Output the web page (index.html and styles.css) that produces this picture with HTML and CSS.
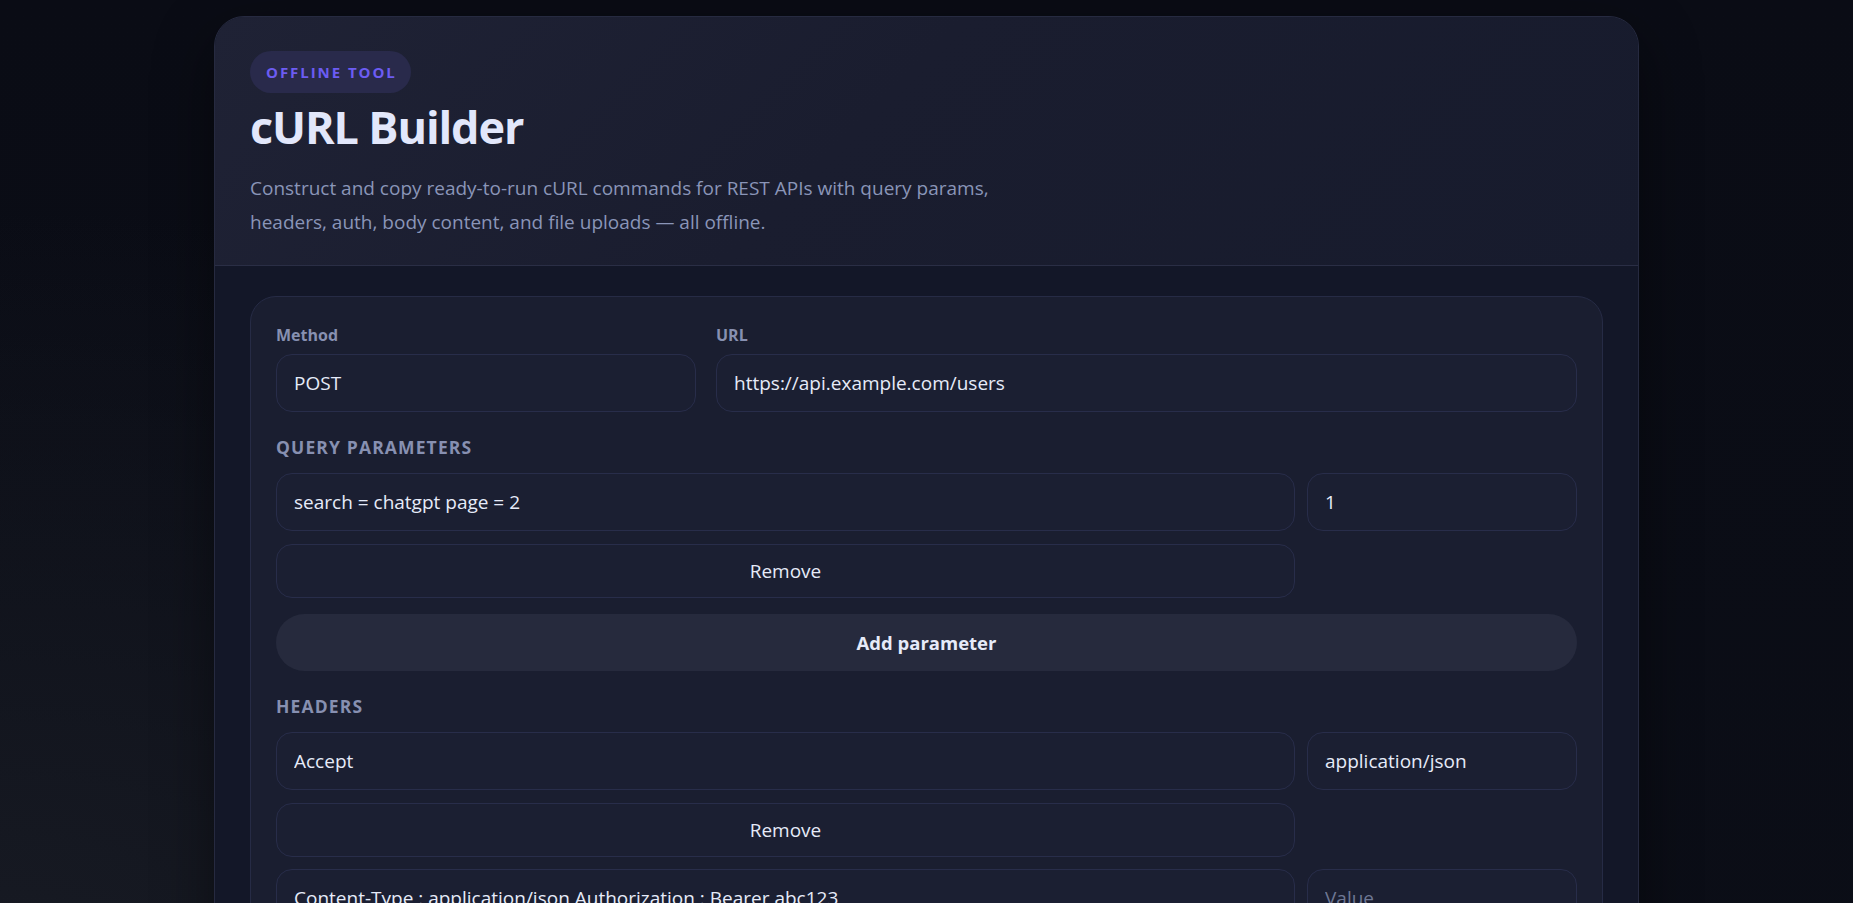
FILE: index.html
```html
<!DOCTYPE html>
<html lang="en">
<head>
<meta charset="utf-8">
<title>cURL Builder</title>
<link rel="stylesheet" href="styles.css">
</head>
<body>
<main class="page">
  <section class="card">
    <header class="hero">
      <span class="badge">Offline tool</span>
      <h1 class="title">cURL Builder</h1>
      <p class="lead">Construct and copy ready-to-run cURL commands for REST APIs with query params, headers, auth, body content, and file uploads — all offline.</p>
    </header>
    <div class="card-body">
      <div class="panel">
        <div class="request-row">
          <div class="field">
            <span class="field-label">Method</span>
            <input class="input" type="text" value="POST">
          </div>
          <div class="field">
            <span class="field-label">URL</span>
            <input class="input" type="text" value="https://api.example.com/users">
          </div>
        </div>

        <h2 class="section-title">Query parameters</h2>
        <div class="kv-list">
          <div class="kv-row">
            <input class="input" type="text" value="search = chatgpt page = 2">
            <input class="input" type="text" value="1">
            <button class="btn-remove" type="button">Remove</button>
          </div>
        </div>
        <button class="btn-add" type="button">Add parameter</button>

        <h2 class="section-title">Headers</h2>
        <div class="kv-list">
          <div class="kv-row">
            <input class="input" type="text" value="Accept">
            <input class="input" type="text" value="application/json">
            <button class="btn-remove" type="button">Remove</button>
          </div>
          <div class="kv-row">
            <input class="input" type="text" value="Content-Type : application/json Authorization : Bearer abc123">
            <input class="input" type="text" placeholder="Value">
            <button class="btn-remove" type="button">Remove</button>
          </div>
        </div>
        <button class="btn-add" type="button">Add header</button>

        <h2 class="section-title">Authentication</h2>
        <div class="request-row">
          <div class="field">
            <span class="field-label">Type</span>
            <input class="input" type="text" value="None">
          </div>
          <div class="field">
            <span class="field-label">Token</span>
            <input class="input" type="text" placeholder="Token">
          </div>
        </div>

        <h2 class="section-title">Body</h2>
        <textarea class="textarea">{ "name": "Ada", "role": "admin" }</textarea>

        <h2 class="section-title">File upload</h2>
        <div class="dropzone">Choose a file to attach with -F (optional)</div>

        <h2 class="section-title">Generated command</h2>
        <pre class="output">curl -X POST "https://api.example.com/users?search+%3D+chatgpt+page+%3D+2=1" \
  -H "Accept: application/json" \
  -d '{ "name": "Ada", "role": "admin" }'</pre>
        <button class="btn-add" type="button">Copy command</button>
      </div>
    </div>
  </section>
</main>
</body>
</html>
```

FILE: styles.css
```css
* { box-sizing: border-box; }

html { background: #0b0e17; }

body {
  margin: 0;
  font-family: "Open Sans", "Noto Sans", sans-serif;
  color: #e4e9f8;
  background:
    radial-gradient(ellipse at 0% 50%, #171a23 0%, rgba(23,26,35,0) 55%),
    linear-gradient(180deg, #0a0c15 0%, #0c0f18 100%);
  min-height: 100vh;
}

.page {
  padding: 16px 0 32px;
}

.card {
  width: 1425px;
  margin: 0 auto;
  border: 1px solid #262a40;
  border-radius: 30px;
  overflow: hidden;
  background: #131728;
  box-shadow: 0 20px 60px rgba(0,0,0,0.45);
}

.hero {
  padding: 34px 35px 26px;
  background: linear-gradient(135deg, #1f2235 0%, #1a1d2f 45%, #171b2d 100%);
  border-bottom: 1px solid #2a2e45;
}

.badge {
  display: inline-flex;
  align-items: center;
  height: 42px;
  padding: 0 14px 0 16px;
  border-radius: 21px;
  background: #292a4b;
  color: #6c5cf2;
  font-size: 15px;
  font-weight: 700;
  letter-spacing: 0.13em;
  text-transform: uppercase;
}

.title {
  margin: 9px 0 0;
  font-size: 45px;
  line-height: 50px;
  font-weight: 700;
  letter-spacing: -0.025em;
  color: #e2e7fb;
}

.lead {
  margin: 19px 0 0;
  max-width: 760px;
  font-size: 19px;
  line-height: 34px;
  color: #8a95b8;
}

.card-body {
  padding: 30px 35px 35px;
}

.panel {
  border: 1px solid #262b45;
  border-radius: 26px;
  background: #1a1e30;
  padding: 28px 25px 28px;
}

.request-row {
  display: grid;
  grid-template-columns: 420px 1fr;
  gap: 20px;
}

.field {
  display: flex;
  flex-direction: column;
  gap: 9px;
}

.field-label {
  font-size: 16px;
  line-height: 20px;
  font-weight: 700;
  color: #8790b1;
}

.input {
  display: block;
  width: 100%;
  height: 58px;
  padding: 0 17px;
  border: 1px solid #282d4a;
  border-radius: 16px;
  background: #1b1f32;
  color: #e6ebf9;
  font-family: inherit;
  font-size: 19px;
  outline: none;
}

.input::placeholder { color: #6e7794; }

.section-title {
  margin: 25px 0 16px;
  font-size: 17.5px;
  line-height: 20px;
  font-weight: 700;
  letter-spacing: 0.065em;
  text-transform: uppercase;
  color: #8790b1;
}

.kv-list {
  display: flex;
  flex-direction: column;
  gap: 12px;
}

.kv-row {
  display: grid;
  grid-template-columns: 1fr 270px;
  gap: 13px 12px;
}

.btn-remove {
  height: 54px;
  border: 1px solid #282d4a;
  border-radius: 16px;
  background: #1b1f32;
  color: #e6ebf9;
  font-family: inherit;
  font-size: 19px;
  cursor: pointer;
}

.btn-add {
  display: block;
  width: 100%;
  height: 57px;
  margin-top: 16px;
  border: none;
  border-radius: 29px;
  background: #262a3d;
  color: #e6ebf9;
  font-family: inherit;
  font-size: 18.5px;
  font-weight: 700;
  cursor: pointer;
}

.textarea {
  display: block;
  width: 100%;
  height: 150px;
  padding: 16px 17px;
  border: 1px solid #282d4a;
  border-radius: 16px;
  background: #1b1f32;
  color: #e6ebf9;
  font-family: "Liberation Mono", monospace;
  font-size: 16px;
  resize: none;
  outline: none;
}

.dropzone {
  display: flex;
  align-items: center;
  height: 72px;
  padding: 0 18px;
  border: 1px dashed #343a5c;
  border-radius: 16px;
  color: #8790b1;
  font-size: 17px;
}

.output {
  margin: 0;
  padding: 18px;
  border: 1px solid #282d4a;
  border-radius: 16px;
  background: #111423;
  color: #b9c4ea;
  font-family: "Liberation Mono", monospace;
  font-size: 16px;
  line-height: 24px;
  white-space: pre-wrap;
}
```
